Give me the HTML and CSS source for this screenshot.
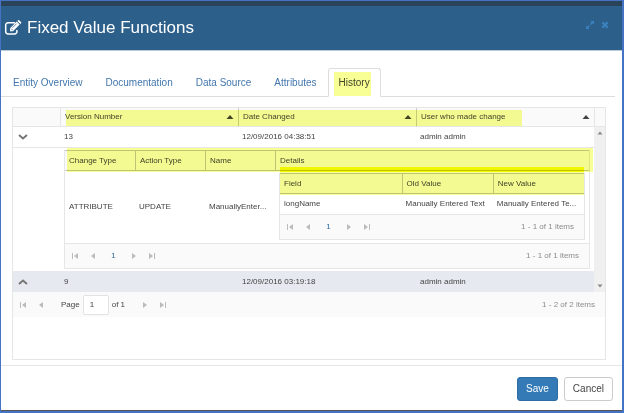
FILE: index.html
```html
<!DOCTYPE html>
<html lang="en">
<head>
<meta charset="utf-8">
<title>Fixed Value Functions</title>
<link rel="stylesheet" href="styles.css">
</head>
<body>
<svg class="sprite" aria-hidden="true">
  <symbol id="first" viewBox="0 0 8 8"><path d="M1 1h1v6H1zM7 1v6L3 4z"/></symbol>
  <symbol id="prev" viewBox="0 0 8 8"><path d="M6 1v6L2 4z"/></symbol>
  <symbol id="next" viewBox="0 0 8 8"><path d="M2 1v6l4-3z"/></symbol>
  <symbol id="last" viewBox="0 0 8 8"><path d="M6 1h1v6H6zM1 1v6l4-3z"/></symbol>
  <symbol id="sort" viewBox="0 0 8 8"><path d="M4 2l3.500 4h-7z"/></symbol>
</svg>
<div class="modal">
  <header class="modal-header">
    <svg class="edit-icon" viewBox="0 0 18 16" aria-hidden="true">
      <path d="M11 2.800H4A2.300 2.300 0 0 0 1.700 5.100v6.600A2.300 2.300 0 0 0 4 14h6.600a2.300 2.300 0 0 0 2.300-2.300V10" fill="none" stroke="#fff" stroke-width="1.500"/>
      <path d="M6 8.200 12.700 1.500l3 3L9 11.200H6zM13.400.9l.6-.6q.6-.5 1.200 0l1.800 1.800q.5.600 0 1.200l-.6.600z" fill="#fff"/>
      <path d="M7.200 8.700l1.500 1.500M8.500 7.700l4-4" stroke="#2c5f8a" stroke-width=".7"/>
    </svg>
    <h1>Fixed Value Functions</h1>
    <button class="tool" aria-label="Expand"><svg viewBox="0 0 10 10"><path d="M5.500 1H9v3.500L7.800 3.300 6 5.100 4.900 4l1.800-1.800zM1 5.500l1.200 1.200L4 4.900 5.100 6 3.300 7.800 4.500 9H1z"/></svg></button>
    <button class="tool" aria-label="Close"><svg viewBox="0 0 10 10"><path d="M3 1.500l2 2 2-2L8.500 3l-2 2 2 2L7 8.500l-2-2-2 2L1.500 7l2-2-2-2z"/></svg></button>
  </header>
  <main class="modal-body">
    <nav class="tabs">
      <a href="#overview">Entity Overview</a>
      <a href="#documentation">Documentation</a>
      <a href="#source">Data Source</a>
      <a href="#attributes">Attributes</a>
      <a href="#history" class="active" aria-current="page">History</a>
    </nav>
    <section class="grid">
      <div class="grid-content">
        <div class="versions">
          <table>
            <colgroup><col class="toggle-col"><col><col><col></colgroup>
            <thead>
              <tr>
                <th></th>
                <th>Version Number<svg class="sort"><use href="#sort"/></svg></th>
                <th>Date Changed<svg class="sort"><use href="#sort"/></svg></th>
                <th>User who made change<svg class="sort"><use href="#sort"/></svg></th>
              </tr>
            </thead>
            <tbody>
              <tr>
                <td><button class="toggle" aria-label="Collapse version 13"><svg viewBox="0 0 10 6"><path d="M1 1l4 3.500L9 1"/></svg></button></td>
                <td>13</td><td>12/09/2016 04:38:51</td><td>admin admin</td>
              </tr>
              <tr class="detail">
                <td></td>
                <td colspan="3">
                  <div class="box changes">
                    <table>
                      <colgroup><col class="change-col"><col class="change-col"><col class="change-col"><col></colgroup>
                      <thead><tr><th>Change Type</th><th>Action Type</th><th>Name</th><th>Details</th></tr></thead>
                      <tbody>
                        <tr>
                          <td>ATTRIBUTE</td><td>UPDATE</td><td>ManuallyEnter...</td>
                          <td class="fields-cell">
                            <div class="box fields">
                              <table>
                                <colgroup><col class="field-col"><col><col></colgroup>
                                <thead><tr><th>Field</th><th>Old Value</th><th>New Value</th></tr></thead>
                                <tbody><tr><td>longName</td><td>Manually Entered Text</td><td>Manually Entered Te...</td></tr></tbody>
                              </table>
                              <div class="pager">
                                <button aria-label="First page"><svg><use href="#first"/></svg></button>
                                <button aria-label="Previous page"><svg><use href="#prev"/></svg></button>
                                <span class="current">1</span>
                                <button aria-label="Next page"><svg><use href="#next"/></svg></button>
                                <button aria-label="Last page"><svg><use href="#last"/></svg></button>
                                <span class="info">1 - 1 of 1 items</span>
                              </div>
                            </div>
                          </td>
                        </tr>
                      </tbody>
                    </table>
                    <div class="pager">
                      <button aria-label="First page"><svg><use href="#first"/></svg></button>
                      <button aria-label="Previous page"><svg><use href="#prev"/></svg></button>
                      <span class="current">1</span>
                      <button aria-label="Next page"><svg><use href="#next"/></svg></button>
                      <button aria-label="Last page"><svg><use href="#last"/></svg></button>
                      <span class="info">1 - 1 of 1 items</span>
                    </div>
                  </div>
                </td>
              </tr>
              <tr class="alt">
                <td><button class="toggle" aria-label="Expand version 9"><svg viewBox="0 0 10 6"><path d="M1 5l4-3.500L9 5"/></svg></button></td>
                <td>9</td><td>12/09/2016 03:19:18</td><td>admin admin</td>
              </tr>
            </tbody>
          </table>
        </div>
        <div class="scroll">
          <div class="corner"></div>
          <div class="track">
            <svg viewBox="0 0 8 8"><path d="M4 2.500L6.500 5.500h-5z"/></svg>
            <svg viewBox="0 0 8 8"><path d="M4 5.500L1.500 2.500h5z"/></svg>
          </div>
        </div>
      </div>
      <div class="pager main-pager">
        <button aria-label="First page"><svg><use href="#first"/></svg></button>
        <button aria-label="Previous page"><svg><use href="#prev"/></svg></button>
        <label for="page">Page</label>
        <input id="page" type="text" value="1">
        <span class="total">of 1</span>
        <button aria-label="Next page"><svg><use href="#next"/></svg></button>
        <button aria-label="Last page"><svg><use href="#last"/></svg></button>
        <span class="info">1 - 2 of 2 items</span>
      </div>
    </section>
  </main>
  <footer class="modal-footer">
    <button class="btn primary">Save</button>
    <button class="btn">Cancel</button>
  </footer>
</div>
</body>
</html>
```

FILE: styles.css
```css
:root {
  --line: #e6e6e6;
  --blue: #337ab7;
  --mark: #f8ff94;
}

* { box-sizing: border-box; }

body {
  margin: 0;
  font: 8px/12px "Liberation Sans", Arial, sans-serif;
  color: #444;
  background: #fff;
}

button, input { font: inherit; color: inherit; }

button {
  padding: 0;
  border: 0;
  background: none;
}

svg { display: block; fill: currentColor; }

.sprite { display: none; }

.modal {
  display: flex;
  flex-direction: column;
  min-height: 100vh;
  border: 1px solid #4472c4;
  border-width: 1px 2px 2px 1px;
}

.modal-header {
  display: flex;
  align-items: center;
  height: 50px;
  padding: 0 12px 0 3px;
  border-top: 5px solid #2a4359;
  border-bottom: 1px solid #b9cbd9;
  background: #2c5f8a;
  color: #fff;
}

.edit-icon { width: 18px; height: 16px; }

h1 {
  flex: 1;
  margin: 0 0 0 5px;
  font-size: 17px;
  line-height: 20px;
  font-weight: 400;
}

.tool {
  margin: 0 0 6px 5px;
  color: #3a83c0;
}

.tool svg { width: 10px; height: 10px; }

.modal-body { flex: 1; padding: 17px 7px 5px 0; }

.tabs {
  display: flex;
  border-bottom: 1px solid #ddd;
}

.tabs a {
  padding: 8px 11px 6px 12px;
  font-size: 10px;
  line-height: 13px;
  color: #4377ad;
  text-decoration: none;
}

.tabs .active {
  position: relative;
  margin-bottom: -1px;
  padding: 7px 10px;
  border: 1px solid #ddd;
  border-bottom-color: #fff;
  border-radius: 3px 3px 0 0;
  color: #444;
  background: #fff;
}

/* Highlighter strokes laid over the tab and the table headings */
.tabs .active::after,
.versions::after,
.changes::after,
.fields::after {
  content: "";
  position: absolute;
  background: var(--mark);
  mix-blend-mode: multiply;
  pointer-events: none;
}

.tabs .active::after { inset: 3px 9px 0 5px; }

.grid {
  min-height: 253px;
  margin: 10px 9px 0 11px;
  border: 1px solid var(--line);
}

.grid-content { display: flex; }

table {
  width: 100%;
  table-layout: fixed;
  border-collapse: separate;
  border-spacing: 0;
}

th, td {
  height: 20px;
  padding: 0 4px;
  text-align: left;
  font-weight: 400;
  white-space: nowrap;
}

th {
  height: 19px;
  border-bottom: 1px solid var(--line);
  background: #fafafa;
  color: #444;
}

th + th { border-left: 1px solid #ccc; }

th:first-child + th { border-left-color: var(--line); }

.versions { position: relative; flex: 1; }
.versions::after { top: 2px; left: 53px; right: 72px; height: 16px; }
.toggle-col { width: 47px; }
.change-col { width: 70px; }
.field-col { width: 40%; }

.sort {
  float: right;
  width: 8px;
  height: 8px;
  margin: 2px 0;
}

.toggle {
  display: block;
  margin-left: 1px;
}

.toggle svg {
  width: 10px;
  height: 6px;
  fill: none;
  stroke: #777;
  stroke-width: 2;
}

.detail > td {
  padding: 2px 4px;
  border-top: 1px solid var(--line);
}

.alt td { height: 21px; background: #e6e9f0; }

.box {
  position: relative;
  border: 1px solid var(--line);
}

.box thead th {
  height: 21px;
  border-color: #c4c4c4;
  border-top: 1px solid #c4c4c4;
}

.box table { margin-top: -1px; }

.changes::after { top: -3px; left: 2px; right: -4px; height: 24px; }

.fields::after {
  top: -7px;
  left: 0;
  right: 0;
  height: 28px;
  background: linear-gradient(#fdfb00 5px, var(--mark) 5px);
}

.changes .fields-cell { padding: 2px 4px 3px; }

.pager {
  display: flex;
  align-items: center;
  height: 25px;
  padding: 0 10px 0 1px;
  border-top: 1px solid var(--line);
  background: #fafafa;
}

.pager button {
  width: 18px;
  color: #bbb;
}

.pager svg { width: 8px; height: 8px; margin: 0 auto; }

.current { width: 23px; text-align: center; color: #2e6a9e; }

.info { margin-left: auto; color: #8c8c8c; }

.main-pager { border-top: 0; }

.main-pager label { margin: 0 3px 0 11px; }

.main-pager input {
  width: 26px;
  height: 20px;
  padding: 0 6px;
  border: 1px solid #e2e2e2;
  border-radius: 2px;
  background: #fff;
}

.total { margin: 0 11px 0 3px; }

.scroll {
  display: flex;
  flex-direction: column;
  width: 11px;
}

.corner {
  height: 19px;
  border-left: 1px solid var(--line);
  border-bottom: 1px solid var(--line);
  background: #fafafa;
}

.track {
  display: flex;
  flex: 1;
  flex-direction: column;
  justify-content: space-between;
  align-items: center;
  padding: 2px 0;
  background: #f0f0f0;
  color: #888;
}

.track svg { width: 8px; height: 8px; }

.modal-footer {
  display: flex;
  justify-content: flex-end;
  gap: 6px;
  padding: 11px 9px 9px;
  border-top: 1px solid var(--line);
  border-bottom: 1px solid #555;
}

.btn {
  height: 24px;
  padding: 0 8px;
  border: 1px solid #ccc;
  border-radius: 3px;
  font-size: 10px;
  background: #fff;
  color: #444;
}

.primary {
  border-color: #2e6da4;
  background: var(--blue);
  color: #fff;
}
```
